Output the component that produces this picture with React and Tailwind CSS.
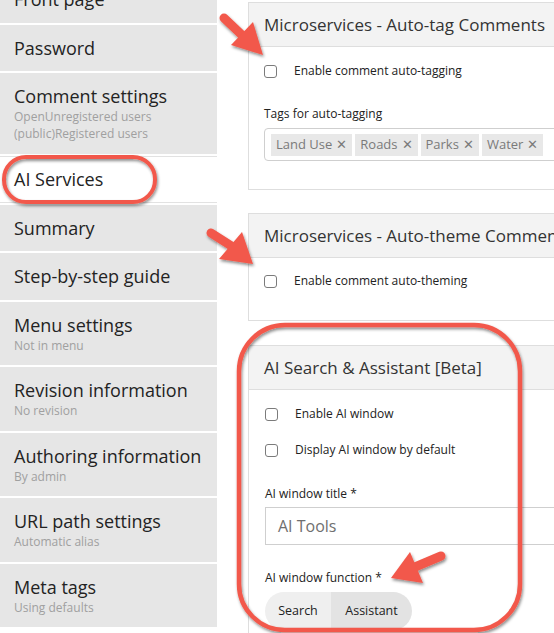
import React from "react";

const navItems = [
  { title: "Front page" },
  { title: "Password" },
  { title: "Comment settings", sub: ["OpenUnregistered users", "(public)Registered users"] },
  { title: "AI Services", active: true },
  { title: "Summary" },
  { title: "Step-by-step guide" },
  { title: "Menu settings", sub: ["Not in menu"] },
  { title: "Revision information", sub: ["No revision"] },
  { title: "Authoring information", sub: ["By admin"] },
  { title: "URL path settings", sub: ["Automatic alias"] },
  { title: "Meta tags", sub: ["Using defaults"] },
];

const tags = ["Land Use", "Roads", "Parks", "Water"];

function NavItem({ item }) {
  return (
    <div
      className={
        item.active
          ? "bg-white border-y border-[#e2e2e2] pl-[14px] pt-[11px] pb-[11px]"
          : "bg-[#e6e6e6] pl-[14px] pt-[12px] pb-[11.5px]"
      }
    >
      <div className="text-[18px] leading-[23px] text-[#232323]">{item.title}</div>
      {item.sub &&
        item.sub.map((line) => (
          <div key={line} className="text-[12px] leading-[17px] text-[#a0a0a0]">
            {line}
          </div>
        ))}
    </div>
  );
}

function Checkbox({ label }) {
  return (
    <div className="flex items-center h-[20px]">
      <div className="w-[13px] h-[13px] rounded-[3px] border border-[#7b7b7b] bg-white" />
      <span className="ml-[17px] text-[12px] text-[#222]">{label}</span>
    </div>
  );
}

function Panel({ title, children, className }) {
  return (
    <div className={"border border-[#dedede] bg-white " + (className || "")}>
      <div className="h-[44px] bg-[#f3f3f3] border-b border-[#dedede] flex items-center pl-[15px] text-[17px] text-[#333] whitespace-nowrap">
        {title}
      </div>
      {children}
    </div>
  );
}

// Annotations rouges dessinées par-dessus la capture
function Annotations() {
  const red = "#f2594b";
  return (
    <svg className="absolute inset-0 pointer-events-none" width="554" height="633" viewBox="0 0 554 633">
      <defs>
        <filter id="sh" x="-20%" y="-20%" width="140%" height="140%">
          <feDropShadow dx="1" dy="2" stdDeviation="1.4" floodColor="#000" floodOpacity="0.45" />
        </filter>
      </defs>
      <g filter="url(#sh)">
        <rect x="4" y="157" width="151" height="45" rx="22" fill="none" stroke={red} strokeWidth="4" />
        <rect x="239" y="325" width="281" height="305" rx="46" fill="none" stroke={red} strokeWidth="4.5" />
        <line x1="224" y1="18" x2="244" y2="37" stroke={red} strokeWidth="9" strokeLinecap="round" />
        <polygon points="231,45 253,22 263,55" fill={red} />
        <line x1="211" y1="233" x2="233" y2="247" stroke={red} strokeWidth="9" strokeLinecap="round" />
        <polygon points="219,259 242,232 253,264" fill={red} />
        <line x1="441" y1="556" x2="415" y2="567" stroke={red} strokeWidth="9" strokeLinecap="round" />
        <polygon points="410,552 423,583 391,578" fill={red} />
      </g>
    </svg>
  );
}

export default function App() {
  return (
    <div className="relative w-[554px] h-[633px] overflow-hidden bg-white font-['Open_Sans',sans-serif] flex">
      {/* Barre latérale */}
      <div className="w-[217px] shrink-0 -mt-[24px] flex flex-col gap-[2px]">
        {navItems.map((item) => (
          <NavItem key={item.title} item={item} />
        ))}
      </div>

      {/* Contenu principal */}
      <div className="ml-[31px] w-[340px] shrink-0 pt-[2px] flex flex-col">
        <Panel title="Microservices - Auto-tag Comments" className="w-[360px]">
          <div className="pl-[15px] pt-[14px] pb-[28px]">
            <Checkbox label="Enable comment auto-tagging" />
            <div className="mt-[25px] text-[12px] leading-[16px] text-[#222]">Tags for auto-tagging</div>
            <div className="mt-[6px] h-[33px] w-[330px] border border-[#cfcfcf] rounded-[4px] flex items-center gap-[3px] pl-[6px]">
              {tags.map((t) => (
                <span
                  key={t}
                  className="h-[22px] flex items-center px-[5px] bg-[#e8e8e8] text-[13px] text-[#7a7a7a] whitespace-nowrap"
                >
                  {t}
                  <span className="ml-[4px] text-[13px]">✕</span>
                </span>
              ))}
            </div>
          </div>
        </Panel>

        <Panel title="Microservices - Auto-theme Comments" className="w-[360px] mt-[23px]">
          <div className="pl-[15px] pt-[13px] pb-[29px]">
            <Checkbox label="Enable comment auto-theming" />
          </div>
        </Panel>

        <Panel title="AI Search & Assistant [Beta]" className="w-[360px] mt-[24px]">
          <div className="pl-[16px] pt-[14px] pb-[20px]">
            <Checkbox label="Enable AI window" />
            <div className="mt-[16px]">
              <Checkbox label="Display AI window by default" />
            </div>
            <div className="mt-[26px] text-[12px] leading-[16px] text-[#222]">AI window title *</div>
            <div className="mt-[5px] h-[38px] w-[330px] border border-[#cfcfcf] flex items-center pl-[12px] text-[16px] text-[#6f6f6f]">
              AI Tools
            </div>
            <div className="mt-[25px] text-[12px] leading-[16px] text-[#222]">AI window function *</div>
            <div className="mt-[6px] inline-flex h-[38px] rounded-full overflow-hidden text-[12.5px] text-[#222]">
              <div className="w-[66px] bg-[#efefef] flex items-center justify-center">Search</div>
              <div className="w-[81px] bg-[#e3e3e3] flex items-center justify-center">Assistant</div>
            </div>
          </div>
        </Panel>
      </div>

      <Annotations />
    </div>
  );
}
